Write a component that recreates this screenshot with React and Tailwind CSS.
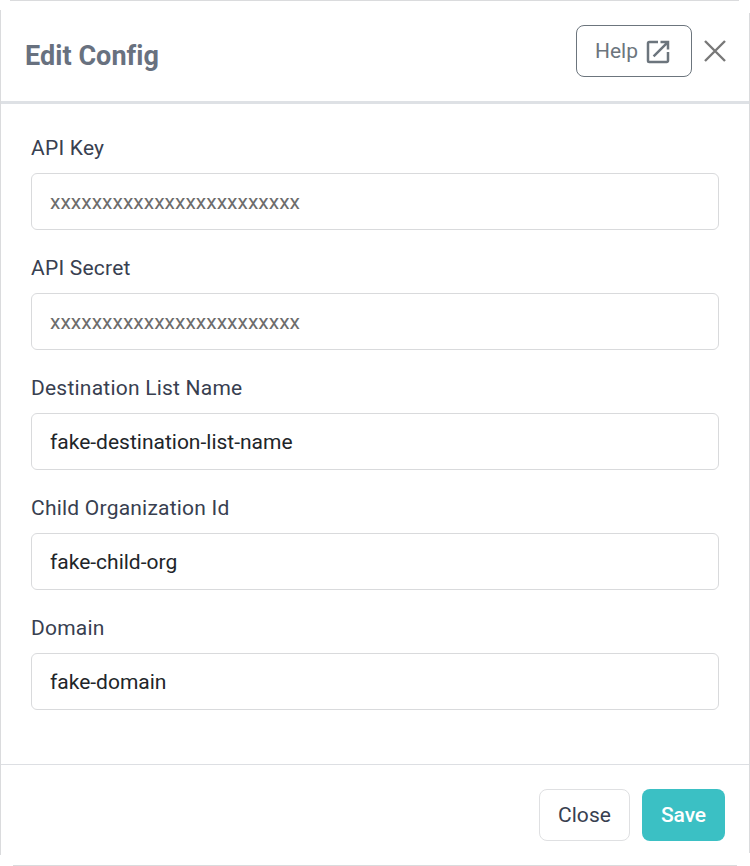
import { useState } from 'react'

const initialFields = [
  { name: 'apiKey', label: 'API Key', value: '', placeholder: 'xxxxxxxxxxxxxxxxxxxxxxxx' },
  { name: 'apiSecret', label: 'API Secret', value: '', placeholder: 'xxxxxxxxxxxxxxxxxxxxxxxx' },
  { name: 'listName', label: 'Destination List Name', value: 'fake-destination-list-name' },
  { name: 'childOrg', label: 'Child Organization Id', value: 'fake-child-org' },
  { name: 'domain', label: 'Domain', value: 'fake-domain' },
]

function ExternalLinkIcon() {
  return (
    <svg width="30" height="30" viewBox="0 0 24 24" fill="currentColor" aria-hidden="true">
      <path d="M19 19H5V5h7V3H5a2 2 0 0 0-2 2v14a2 2 0 0 0 2 2h14c1.1 0 2-.9 2-2v-7h-2v7zM14 3v2h3.59l-9.83 9.83 1.41 1.41L19 6.41V10h2V3h-7z" />
    </svg>
  )
}

function CloseIcon() {
  return (
    <svg width="22" height="22" viewBox="0 0 22 22" fill="none" stroke="currentColor" strokeWidth="2.4" aria-hidden="true">
      <path d="M1 1l20 20M21 1l-20 20" />
    </svg>
  )
}

// hairlines around the dialog, left open at the corners
function Frame() {
  return (
    <div className="pointer-events-none" aria-hidden="true">
      <span className="absolute top-0 right-[11px] left-[10px] h-px bg-[#dadbdd]" />
      <span className="absolute top-[10px] bottom-[11px] left-0 w-px bg-[#dadbdd]" />
      <span className="absolute top-[13px] right-0 bottom-[13px] w-px bg-[#dadbdd]" />
      <span className="absolute right-[13px] bottom-0 left-[13px] h-px bg-[#dadbdd]" />
    </div>
  )
}

function Field({ field, onChange }) {
  return (
    <div className="h-[120px]">
      <label htmlFor={field.name} className="block pb-[10px] text-[21px] leading-[30px] tracking-[0.22px] text-[#384050]">
        {field.label}
      </label>
      <input
        id={field.name}
        value={field.value}
        placeholder={field.placeholder}
        onChange={(e) => onChange(field.name, e.target.value)}
        className="block h-[57px] w-full rounded-[6px] border border-[#d9dadc] bg-white px-[18px] text-[21px] text-[#212529] outline-none placeholder:text-[#6c6c6c] placeholder:opacity-100"
      />
    </div>
  )
}

export default function App() {
  const [fields, setFields] = useState(initialFields)

  const handleChange = (name, value) =>
    setFields(fields.map((f) => (f.name === name ? { ...f, value } : f)))

  return (
    <div className="relative flex h-[866px] w-[750px] flex-col bg-white px-px pt-px pb-px font-['Roboto',sans-serif]">
      <Frame />
      <header className="flex h-[103px] items-start justify-between border-b-[3px] border-[#dee1e5] pt-6 pr-[23.5px] pl-6 text-[#6c757d]">
        <h1 className="pt-[11px] text-[27px] leading-[40px] font-bold tracking-[0.05px] text-[#68717f]">Edit Config</h1>
        <div className="flex items-center gap-[11.5px]">
          <button className="flex h-[52px] w-[116px] items-center justify-center gap-[5px] rounded-[8px] border border-[#6c757d] pt-[2px] text-[21px]">
            Help
            <ExternalLinkIcon />
          </button>
          <button aria-label="Close dialog" className="text-[#787878]">
            <CloseIcon />
          </button>
        </div>
      </header>

      <main className="flex-1 px-[30px] pt-[29px]">
        {fields.map((f) => (
          <Field key={f.name} field={f} onChange={handleChange} />
        ))}
      </main>

      <footer className="flex h-[101px] items-start justify-end gap-3 border-t border-[#dddfe3] pt-6 pr-6 text-[21px]">
        <button className="h-[52px] w-[91px] rounded-[8px] border border-[#dfe0e2] pt-[2px] tracking-[0.1px] text-[#384050]">Close</button>
        <button className="h-[52px] w-[83px] rounded-[8px] bg-[#3bc0c4] pt-[2px] font-medium tracking-[-0.1px] text-white">Save</button>
      </footer>
    </div>
  )
}
